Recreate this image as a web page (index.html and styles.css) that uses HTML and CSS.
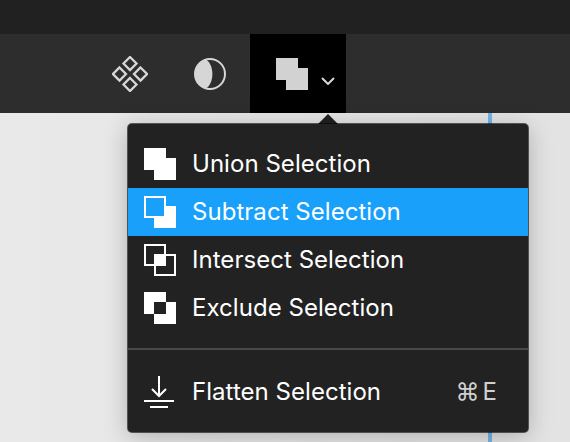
FILE: index.html
```html
<!DOCTYPE html>
<html>

<head>
    <title>Boolean Menu</title>
    <link rel="stylesheet" href="styles.css">
</head>

<body>
    <div class="topBar"></div>
    <div class="toolBar">
        <div class="tool">
            <svg width="36" height="36" viewBox="0 0 36 36" class="toolIcon">
                <path d="M18 1 24.500 7.500 18 14 11.500 7.500Z M18 22 24.500 28.500 18 35 11.500 28.500Z M7.500 11.500 14 18 7.500 24.500 1 18Z M28.500 11.500 35 18 28.500 24.500 22 18Z" fill="none" stroke="#d6d6d6" stroke-width="2.300"/>
            </svg>
        </div>
        <div class="tool">
            <svg width="36" height="36" viewBox="0 0 36 36" class="toolIcon">
                <circle cx="18" cy="18" r="15" fill="none" stroke="#d6d6d6" stroke-width="2"/>
                <path d="M14 3.500A15 15 0 0 0 14 32.500C22.500 27 22.500 9 14 3.500Z" fill="#d6d6d6"/>
            </svg>
        </div>
        <div class="tool toolActive">
            <svg width="32" height="32" viewBox="0 0 32 32" class="toolIcon">
                <path d="M0 0H22V10H32V32H10V22H0Z" fill="#d2d2d2"/>
            </svg>
            <svg width="14" height="8" viewBox="0 0 14 8" class="chevron">
                <path d="M1 1 7 7 13 1" fill="none" stroke="#d6d6d6" stroke-width="2"/>
            </svg>
        </div>
    </div>
    <div class="canvas">
        <div class="guide"></div>
    </div>

    <div class="caret"></div>
    <div class="menu">
        <ul class="menuList">
            <li class="menuItem">
                <svg width="32" height="32" viewBox="0 0 32 32">
                    <path d="M0 0H22V10H32V32H10V22H0Z" fill="#fff"/>
                </svg>
                <span>Union Selection</span>
            </li>
            <li class="menuItem selected">
                <svg width="32" height="32" viewBox="0 0 32 32">
                    <path d="M22 10H32V32H10V22H22Z" fill="#fff"/>
                    <rect x="1" y="1" width="20" height="20" fill="none" stroke="#fff" stroke-width="2"/>
                </svg>
                <span>Subtract Selection</span>
            </li>
            <li class="menuItem">
                <svg width="32" height="32" viewBox="0 0 32 32">
                    <rect x="1" y="1" width="20" height="20" fill="none" stroke="#fff" stroke-width="2"/>
                    <rect x="11" y="11" width="20" height="20" fill="none" stroke="#fff" stroke-width="2"/>
                    <rect x="10" y="10" width="12" height="12" fill="#fff"/>
                </svg>
                <span>Intersect Selection</span>
            </li>
            <li class="menuItem">
                <svg width="32" height="32" viewBox="0 0 32 32">
                    <path d="M0 0H22V10H10V22H0Z M22 10H32V32H10V22H22Z" fill="#fff"/>
                </svg>
                <span>Exclude Selection</span>
            </li>
        </ul>
        <div class="divider"></div>
        <ul class="menuList">
            <li class="menuItem">
                <svg width="32" height="32" viewBox="0 0 32 32">
                    <path d="M15 0V20M8 13 15 20 22 13" fill="none" stroke="#fff" stroke-width="2"/>
                    <path d="M0 25H30M6 31H24" fill="none" stroke="#fff" stroke-width="2"/>
                </svg>
                <span>Flatten Selection</span>
                <span class="shortcut">⌘E</span>
            </li>
        </ul>
    </div>
</body>

</html>
```

FILE: styles.css
```css
html, body {
    height: 100%;
}
body {
    margin: 0;
    display: flex;
    flex-direction: column;
    overflow: hidden;
    background-color: #e5e5e5;
    font-family: Inter, "Liberation Sans", sans-serif;
}
.topBar {
    height: 34px;
    background-color: #212121;
}
.toolBar {
    height: 79px;
    padding-left: 90px;
    display: flex;
    background-color: #2d2d2d;
}
.tool {
    width: 80px;
    display: flex;
    align-items: center;
    justify-content: center;
}
.toolIcon {
    margin-top: 1px;
}
.toolActive {
    width: 96px;
    padding-left: 26px;
    box-sizing: border-box;
    justify-content: flex-start;
    background-color: #000000;
}
.chevron {
    margin: 15px 0 0 13px;
}
.canvas {
    flex: 1;
    background: linear-gradient(90deg, #e9e9e9, #e3e3e3);
}
.guide {
    position: absolute;
    left: 488px;
    top: 113px;
    width: 4px;
    height: 329px;
    background-color: #74b6e8;
}
.caret {
    position: absolute;
    left: 318px;
    top: 114px;
    border-left: 10px solid transparent;
    border-right: 10px solid transparent;
    border-bottom: 10px solid #212121;
}
.menu {
    position: absolute;
    left: 128px;
    top: 124px;
    width: 400px;
    height: 308px;
    padding: 16px 0;
    box-sizing: border-box;
    background-color: #222222;
    border-radius: 4px;
    box-shadow: 0 0 0 1px rgba(0,0,0,0.6), 0 4px 24px rgba(0,0,0,0.25);
    color: #ffffff;
    font-size: 24px;
}
.menuList {
    list-style-type: none;
    margin: 0;
    padding: 0;
}
.menuItem {
    height: 48px;
    padding: 0 28px 0 16px;
    display: flex;
    align-items: center;
    gap: 16px;
    letter-spacing: 0.04px;
}
.menuItem span {
    padding-bottom: 2px;
}
.menuItem svg {
    overflow: visible;
    flex-shrink: 0;
}
.selected {
    background-color: #18a0fb;
}
.divider {
    height: 2px;
    margin: 16px 0 18px;
    background-color: #4a4a4a;
}
.menuItem .shortcut {
    margin-left: auto;
    color: #d0d0d0;
    letter-spacing: 3px;
}
```
